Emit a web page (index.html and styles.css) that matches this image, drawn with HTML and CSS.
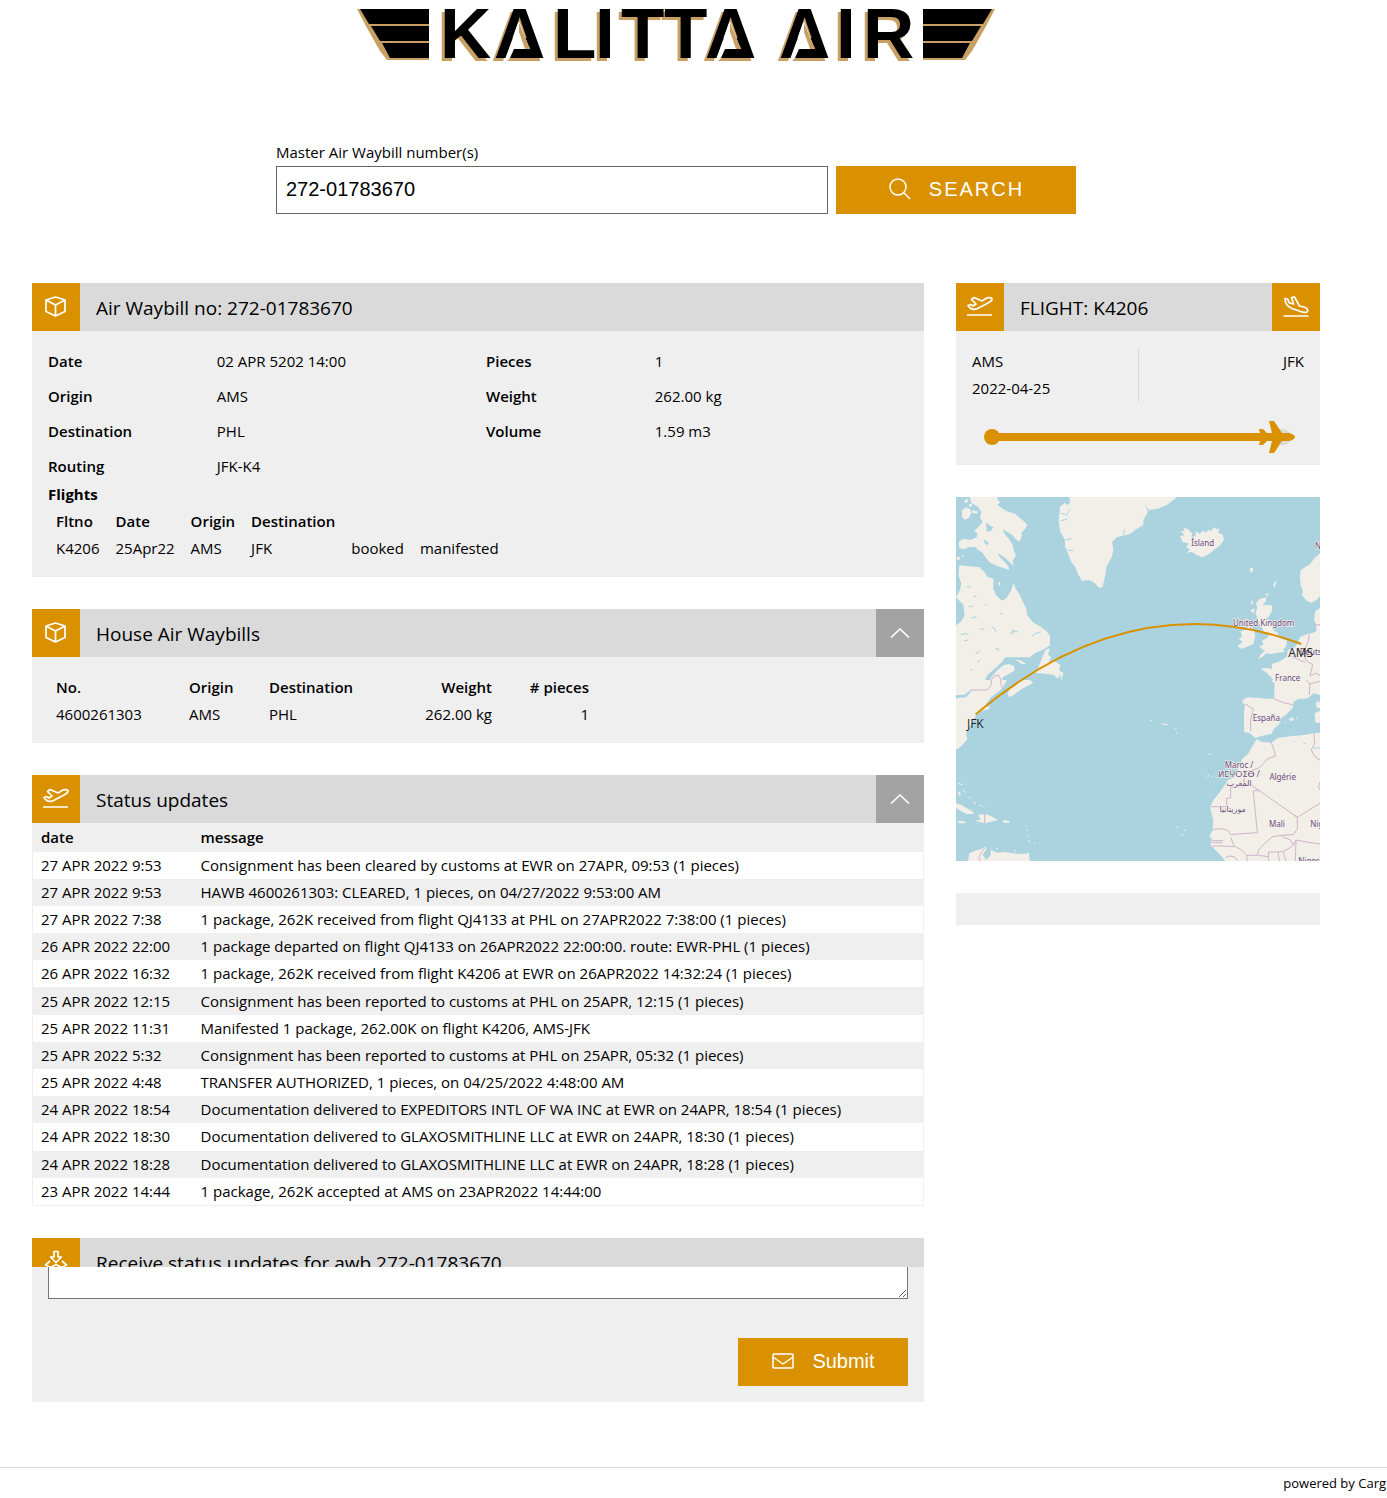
FILE: index.html
```html
<!DOCTYPE html>
<html lang="en">
<head>
    <meta charset="UTF-8">
    <meta name="viewport" content="width=device-width, initial-scale=1.0">
    <title>Kalitta Air - Track and Trace</title>
    <link rel="stylesheet" href="styles.css">
</head>
<body>
    <svg class="sprite" aria-hidden="true">
        <symbol id="icon-box" viewBox="0 0 24 24">
            <path d="M11.500 2 21 5V16.500L11.500 21 2 16.500V5ZM2 5 11.500 10 21 5M11.500 10V21"/>
        </symbol>
        <symbol id="icon-takeoff" viewBox="0 0 28 24">
            <path d="M2 10.500 4.500 9.500 7 11 10 9 5.500 4.500 8 2.500 16 6 20.500 3.300C23 2 26 2.500 26 4S24 7 22 8L11.500 13.500C8 15 4.500 14.500 2 10.500ZM1 20H26"/>
        </symbol>
        <symbol id="icon-landing" viewBox="0 0 28 24">
            <path d="M3 3.500 5.500 4 7.500 8 11.500 9 9.500 2.500 12.500 2 17.500 11 22 12C25.500 13 26 15 25.500 16.500S22 17.300 20 17L10 13.500C5 11.500 3 8 3 3.500ZM1.500 21H26.500"/>
        </symbol>
        <symbol id="icon-up" viewBox="0 0 24 24">
            <path d="M3 16.500 12 8 21 16.500"/>
        </symbol>
        <symbol id="icon-inbox" viewBox="0 0 24 24">
            <path d="M10 1.500H14V7H17.500L12 12.500 6.500 7H10ZM6 11 1.500 15 6.500 17.500 12 14.500 17.500 17.500 22.500 15 18 11M3.500 17V21L12 24 20.500 21V17"/>
        </symbol>
        <symbol id="icon-search" viewBox="0 0 24 24">
            <circle cx="10" cy="10" r="8"/>
            <path d="M15.800 15.800 22 22"/>
        </symbol>
        <symbol id="icon-mail" viewBox="0 0 24 24">
            <rect x="2" y="5" width="20" height="14" rx="1"/>
            <path d="M2 8 12 15 22 8"/>
        </symbol>
        <!-- open foot of the three A's in the logo -->
        <symbol id="logo-foot" viewBox="0 0 50 56" overflow="visible">
            <path fill="#fff" d="M24 14 35 43H20L15 55H9Z"/>
            <path fill="#c9a063" d="M24 16V25L30 42H35Z"/>
            <path fill="#000" d="M19 42H36L40 51H15Z"/>
            <path fill="#c9a063" d="M15 51H40V54H12Z"/>
        </symbol>
    </svg>

    <div class="page">
        <header class="logo">
            <svg viewBox="0 0 640 56" role="img" aria-label="Kalitta Air">
                <path class="wing-edge" d="M1 2H73V53H31L24 44 20 37 11 21Z"/>
                <path class="wing-edge" d="M639 2H567V53H609L616 44 620 37 629 21Z"/>
                <path d="M4 2H73V17H13ZM15 19H73V34H24ZM26 36H73V51H34Z"/>
                <path d="M636 2H567V17H627ZM625 19H567V34H616ZM614 36H567V51H606Z"/>
                <text class="logo-text" y="51" x="84 138 197 239 265 308 349 370 423 480 507">KALITTA AIR</text>
                <use href="#logo-foot" x="139" width="50" height="56"/>
                <use href="#logo-foot" x="350" width="50" height="56"/>
                <use href="#logo-foot" x="424" width="50" height="56"/>
            </svg>
        </header>

        <form class="search" onsubmit="return false">
            <label for="awb">Master Air Waybill number(s)</label>
            <div class="search-row">
                <input type="text" id="awb" value="272-01783670">
                <button type="submit" class="btn btn-search"><svg class="icon"><use href="#icon-search"/></svg>SEARCH</button>
            </div>
        </form>

        <div class="columns">
            <main class="stack">
                <section class="panel">
                    <div class="panel-head">
                        <span class="tile"><svg class="icon"><use href="#icon-box"/></svg></span>
                        <h2>Air Waybill no: 272-01783670</h2>
                    </div>
                    <div class="panel-body">
                        <div class="details">
                            <dl>
                                <dt>Date</dt><dd>02 APR 5202 14:00</dd>
                                <dt>Origin</dt><dd>AMS</dd>
                                <dt>Destination</dt><dd>PHL</dd>
                                <dt>Routing</dt><dd>JFK-K4</dd>
                            </dl>
                            <dl>
                                <dt>Pieces</dt><dd>1</dd>
                                <dt>Weight</dt><dd>262.00 kg</dd>
                                <dt>Volume</dt><dd>1.59 m3</dd>
                            </dl>
                        </div>
                        <h3>Flights</h3>
                        <table class="flights">
                            <thead>
                                <tr><th>Fltno</th><th>Date</th><th>Origin</th><th>Destination</th><th></th><th></th></tr>
                            </thead>
                            <tbody>
                                <tr><td>K4206</td><td>25Apr22</td><td>AMS</td><td>JFK</td><td>booked</td><td>manifested</td></tr>
                            </tbody>
                        </table>
                    </div>
                </section>

                <section class="panel">
                    <div class="panel-head">
                        <span class="tile"><svg class="icon"><use href="#icon-box"/></svg></span>
                        <h2>House Air Waybills</h2>
                        <button type="button" class="tile toggle" aria-label="Collapse"><svg class="icon"><use href="#icon-up"/></svg></button>
                    </div>
                    <div class="panel-body">
                        <table class="house">
                            <thead>
                                <tr><th>No.</th><th>Origin</th><th>Destination</th><th class="num">Weight</th><th class="num"># pieces</th></tr>
                            </thead>
                            <tbody>
                                <tr><td>4600261303</td><td>AMS</td><td>PHL</td><td class="num">262.00 kg</td><td class="num">1</td></tr>
                            </tbody>
                        </table>
                    </div>
                </section>

                <section class="panel">
                    <div class="panel-head">
                        <span class="tile"><svg class="icon icon-wide"><use href="#icon-takeoff"/></svg></span>
                        <h2>Status updates</h2>
                        <button type="button" class="tile toggle" aria-label="Collapse"><svg class="icon"><use href="#icon-up"/></svg></button>
                    </div>
                    <table class="status">
                        <thead>
                            <tr><th>date</th><th>message</th></tr>
                        </thead>
                        <tbody>
                            <tr><td>27 APR 2022 9:53</td><td>Consignment has been cleared by customs at EWR on 27APR, 09:53 (1 pieces)</td></tr>
                            <tr><td>27 APR 2022 9:53</td><td>HAWB 4600261303: CLEARED, 1 pieces, on 04/27/2022 9:53:00 AM</td></tr>
                            <tr><td>27 APR 2022 7:38</td><td>1 package, 262K received from flight QJ4133 at PHL on 27APR2022 7:38:00 (1 pieces)</td></tr>
                            <tr><td>26 APR 2022 22:00</td><td>1 package departed on flight QJ4133 on 26APR2022 22:00:00. route: EWR-PHL (1 pieces)</td></tr>
                            <tr><td>26 APR 2022 16:32</td><td>1 package, 262K received from flight K4206 at EWR on 26APR2022 14:32:24 (1 pieces)</td></tr>
                            <tr><td>25 APR 2022 12:15</td><td>Consignment has been reported to customs at PHL on 25APR, 12:15 (1 pieces)</td></tr>
                            <tr><td>25 APR 2022 11:31</td><td>Manifested 1 package, 262.00K on flight K4206, AMS-JFK</td></tr>
                            <tr><td>25 APR 2022 5:32</td><td>Consignment has been reported to customs at PHL on 25APR, 05:32 (1 pieces)</td></tr>
                            <tr><td>25 APR 2022 4:48</td><td>TRANSFER AUTHORIZED, 1 pieces, on 04/25/2022 4:48:00 AM</td></tr>
                            <tr><td>24 APR 2022 18:54</td><td>Documentation delivered to EXPEDITORS INTL OF WA INC at EWR on 24APR, 18:54 (1 pieces)</td></tr>
                            <tr><td>24 APR 2022 18:30</td><td>Documentation delivered to GLAXOSMITHLINE LLC at EWR on 24APR, 18:30 (1 pieces)</td></tr>
                            <tr><td>24 APR 2022 18:28</td><td>Documentation delivered to GLAXOSMITHLINE LLC at EWR on 24APR, 18:28 (1 pieces)</td></tr>
                            <tr><td>23 APR 2022 14:44</td><td>1 package, 262K accepted at AMS on 23APR2022 14:44:00</td></tr>
                        </tbody>
                    </table>
                </section>

                <section class="panel">
                    <div class="panel-head">
                        <span class="tile"><svg class="icon"><use href="#icon-inbox"/></svg></span>
                        <h2>Receive status updates for awb 272-01783670</h2>
                    </div>
                    <form class="subscribe" onsubmit="return false">
                        <textarea aria-label="E-mail addresses"></textarea>
                        <button type="submit" class="btn btn-submit"><svg class="icon"><use href="#icon-mail"/></svg>Submit</button>
                    </form>
                </section>
            </main>

            <aside class="stack">
                <section class="panel">
                    <div class="panel-head">
                        <span class="tile"><svg class="icon icon-wide"><use href="#icon-takeoff"/></svg></span>
                        <h2>FLIGHT: K4206</h2>
                        <span class="tile"><svg class="icon icon-wide"><use href="#icon-landing"/></svg></span>
                    </div>
                    <div class="panel-body">
                        <div class="legs">
                            <div>AMS<br>2022-04-25</div>
                            <div class="arrival">JFK</div>
                        </div>
                        <div class="progress">
                            <span class="dot"></span>
                            <span class="line"></span>
                            <svg class="plane" viewBox="0 0 37 32">
                                <circle class="end" cx="25" cy="16" r="8"/>
                                <path d="M1 8H5L9 12H14L11 0H16L24 12H31C34 12.500 37 14.500 37 16S34 19.500 31 20H24L16 32H11L14 20H9L5 24H1L3 16Z"/>
                            </svg>
                        </div>
                    </div>
                </section>

                <svg class="map" viewBox="0 0 1092 1092" role="img" aria-label="Route map">
                    <!-- North America and Greenland -->
                    <g transform="translate(-18 -21)">
                        <path class="land" d="M60 21H140L150 38 142 44 160 58 172 64 196 72 210 84 222 94 232 104 226 116 214 128 216 136 208 156 196 146 188 136 172 126 158 118 164 132 178 148 188 166 192 182 198 196 188 212 192 228 184 222 168 206 154 196 142 190 150 202 166 218 176 232 178 240 160 234 142 228 120 218 104 198 96 186 84 180 76 170 56 172 42 178 28 174 26 156 40 146 62 150 80 142 82 130 72 122 84 112 98 96 90 82 94 66 84 50 64 40ZM36 62 46 52 60 56 64 70 56 84 44 90 36 80ZM64 60 82 64 84 70 68 70ZM42 32 52 26 56 34 46 40ZM56 42 66 42 66 50 58 50ZM20 200 30 202 30 208 22 210ZM34 194 42 196 40 202Z"/>
                        <path class="water" d="M108 96 118 106 130 112 122 124 110 124ZM104 148 116 160 110 166 102 156Z"/>
                        <path class="land" d="M28 226 48 228 76 230 88 232 104 246 112 260 130 266 130 296 138 316 156 332 170 324 184 300 190 278 196 294 210 316 220 338 228 354 232 376 250 398 272 410 290 424 300 438 300 466 278 480 256 488 240 502 166 502 154 518 134 536 112 556 104 572 156 572 158 562 176 552 194 542 192 528 176 522 160 526 140 542 124 562 110 590 18 590V406L36 392 44 374 40 344 18 322 30 300 34 280 26 258ZM194 508 214 512 228 522 214 522ZM300 476 288 478 276 504 266 530 256 548 288 552 310 554 324 566 330 552 334 570 340 548 328 542 330 524 314 514 296 516 304 502 294 494Z"/>
                        <path class="land" d="M330 50 344 38 352 46 360 38 358 21H580V105L560 116 540 132 524 136 500 142 486 156 490 180 484 204 470 228 466 254 458 290 448 294 430 276 416 270 396 272 384 252 376 232 364 216 356 196 346 172 344 148 330 124 326 92Z"/>
                        <path class="lake" d="M50 292l12-2M70 320l10-2M56 350l12-2M64 384l16-4M32 434l16-4 8 6M76 492l12-8M92 416l10 2M124 412l10 4 4 10M136 478l8-4 2 10M180 430l10-8 14 4M246 438l16-10 10-2M84 518l4-8M60 538l8 2M150 370l8 2M104 344l6 2M42 452l12-2M334 70l20 6M332 92l20-4M346 150l18-4M350 180l20 2M352 70l10-12M520 136l4-18M190 434l-2-16"/>
                        <path class="land" d="M144 278l6 -2 2 8-6 2z"/>
                        <path class="border" d="M124 570 132 558 146 556 154 572"/>
                    </g>
                    <!-- US east coast, Caribbean, South America -->
                    <g transform="translate(-18 549)">
                        <path class="land" d="M18 0H215L196 18 180 26 172 42 178 52 192 44 214 28 240 14 250 8 240 0H170L160 20 152 30 124 50 104 78 120 80 116 88 96 92 80 102 68 126 56 144 48 160 52 178 42 190 28 204 18 208ZM18 370 34 374 52 386 68 394 72 402 50 402 34 394 18 384ZM22 422 44 424 46 430 28 430ZM72 422 92 420 84 404 104 402 124 408 144 420 130 424 106 430ZM160 420 178 422 178 428 160 428ZM54 543 58 520 76 512 94 508 104 500 110 506 98 524 108 540 122 526 122 510 142 518 164 516 190 520 216 522 236 520 240 543ZM26 332 32 342 30 350 24 340Z"/>
                        <path class="water" d="M18 46 44 44 62 30 64 34 48 52 18 54Z"/>
                        <path class="border" d="M62 30H112L124 14V0M152 0 154 18 162 30M104 402V430M104 504 92 520 86 534 92 543"/>
                        <path class="islands" d="M24 310l14 4M38 330l8 8M56 352l6 4M70 366l8 4M88 376l6 2M100 380l4 2M226 436l2 4M230 450l4 2M234 464l4 6M236 480l2 8M252 488l4 2M122 506l4-2M138 504l6 2M194 512l4 0M232 522l6-2"/>
                    </g>
                    <!-- Iceland, British Isles, Scandinavia -->
                    <g transform="translate(522 -21)">
                        <path class="land" d="M0 21H142L112 44 84 56 56 60 44 44 54 66 42 86 24 104 0 130ZM150 138 164 136 152 122 164 124 160 114 174 118 186 130 184 142 196 138 198 124 210 132 218 122 228 128 234 120 246 122 250 112 262 118 268 114 266 128 278 134 282 148 272 164 256 176 242 188 230 196 216 202 198 194 186 186 170 188 180 178 168 172 176 160 158 156ZM358 236 370 232 368 242 364 250ZM430 284 438 270 438 280 434 294ZM570 190 552 206 540 222 512 240 510 260 512 286 518 300 516 316 530 332 544 338 560 330 570 318ZM390 326 410 322 406 336 398 344 426 346 426 362 416 380 404 386 416 388 422 402 430 420 442 428 448 442 456 448 470 450 470 466 460 478 464 486 444 488 424 492 408 490 398 500 384 506 392 494 404 482 388 470 400 464 396 452 412 444 416 432 402 430 398 416 388 402 382 382 376 372 382 354 378 340ZM332 424 344 420 358 406 372 420 376 438 370 462 352 470 334 476 322 468 338 456 326 446 336 440ZM362 340 370 328 368 344ZM360 362 374 354 372 370ZM406 312 414 310 412 320ZM570 354 556 364 552 388 558 404 560 424 544 430 526 434 510 442 504 460 494 472 474 480 470 500 450 514 426 522 426 536 406 534 392 536 410 548 422 560 434 574 570 574Z"/>
                        <path class="border" d="M538 434 534 456 526 474 524 496 528 512 548 524 540 558 556 550 570 556M552 406 570 404M480 496 500 506 526 518M360 410 366 422"/>
                    </g>
                    <!-- Iberia, France, North and West Africa -->
                    <g transform="translate(522 549)">
                        <path class="land" d="M424 0 434 12 432 56 410 56 384 54 352 52 336 62 344 78 342 100 342 156 360 160 376 174 394 168 424 162 432 146 448 132 450 116 468 104 488 84 490 66 506 56 530 56 552 40 570 46V0ZM558 68 566 62 570 70V84H560ZM554 100 570 92V128H556ZM476 118 488 112 492 120 482 124ZM498 112 504 114 498 116ZM462 126 468 126 466 130ZM380 178 396 186 424 188 444 174 484 168 518 166 552 160 570 158V543H286L268 522 254 508 242 496 246 476 238 468 248 452 250 420 240 382 252 358 270 336 282 318 294 300 314 292 326 262 336 238 354 222 366 200Z"/>
                        <path class="border" d="M340 76 352 74 356 80 370 86 362 120 362 154M432 56 460 68 488 74M530 0 540 12 538 44M538 12 570 4M424 188 432 210 436 228 410 238 404 248 386 264 362 272 344 274 342 314 362 314 488 402 502 412 570 370M342 320 302 322V354H290V380H242M342 300V322M370 332H388M370 334 382 458 324 462 302 464 294 452 276 446 250 448M488 402 502 412V446L490 464 456 466 428 470 404 490 386 510 382 526 350 526 332 508 312 498 302 472M246 482H280M246 488H276M246 498H280L312 500M286 532 302 528 316 532 322 543M350 526 352 543M386 526 414 530M416 543V516H444L460 514 482 502 490 496 482 480 456 470M444 516 448 543M460 516 468 543M490 496 498 480 540 488 570 492M498 480 496 543M552 160 554 190 544 210 556 232 570 240M570 306 566 320 570 330"/>
                        <path class="islands" d="M62 120l4 2M94 132l20 2M134 146l6 2M138 158l4 0M236 222l8 2M226 294l4-4M234 284l2 6M246 290l4-2M256 292l4 2M138 440l4 2M148 464l4-2M162 450l6 2M156 466l8-2"/>
                        <path class="lake" d="M552 204h18M490 186h4M520 190h8"/>
                    </g>
                    <g class="country">
                        <text x="740" y="147">Ísland</text>
                        <text x="923" y="386">United Kingdom</text>
                        <text x="1064" y="473">Deuts</text>
                        <text x="995" y="552">France</text>
                        <text x="931" y="672">España</text>
                        <text x="849" y="814">Maroc /</text>
                        <text x="849" y="840">ⵍⵎⵖⵔⵉⴱ /</text>
                        <text x="849" y="866">المغرب</text>
                        <text x="830" y="946">موريتانيا</text>
                        <text x="980" y="848">Algérie</text>
                        <text x="963" y="990">Mali</text>
                        <text x="1094" y="990">Niger</text>
                        <text x="1068" y="1100">Nigeria</text>
                        <text x="1112" y="156">Norge</text>
                    </g>
                    <path class="route" d="M59 652Q530 254 1036 441"/>
                    <g class="airport">
                        <text x="58" y="692">JFK</text>
                        <text x="1034" y="480">AMS</text>
                    </g>
                </svg>

                <div class="panel empty"></div>
            </aside>
        </div>
    </div>

    <footer>powered by Carg</footer>
</body>
</html>
```

FILE: styles.css
```css
* {
    box-sizing: border-box;
}
body {
    margin: 0;
    font-family: "Segoe UI", "Open Sans", "Noto Sans", sans-serif;
    font-size: 15px;
    line-height: 27px;
    color: #000;
    background-color: #fff;
}
h2, h3, dl, dd {
    margin: 0;
}
.sprite {
    position: absolute;
    width: 0;
    height: 0;
}
.page {
    margin-right: 35px;
    padding: 0 32px;
}
.icon {
    width: 24px;
    height: 24px;
    fill: none;
    stroke: #fff;
    stroke-width: 1.7;
    stroke-linejoin: round;
}
.icon-wide {
    width: 28px;
}

/* logo */
.logo {
    display: flex;
    justify-content: center;
    padding-top: 7px;
}
.logo svg {
    width: 640px;
    max-width: 100%;
    overflow: visible;
}
.logo-text {
    font-family: "Liberation Sans", Arial, sans-serif;
    font-weight: bold;
    font-size: 71px;
    filter: drop-shadow(-3px 3px 0 #c9a063);
}
.wing-edge {
    fill: #c9a063;
}

/* search */
.search {
    max-width: 800px;
    margin: 76px auto 69px;
}
.search label {
    display: block;
}
.search-row {
    display: flex;
    gap: 8px;
}
.search input {
    flex: 1;
    min-width: 0;
    height: 48px;
    padding: 0 9px 2px;
    border: 1px solid #666;
    font-family: "Liberation Sans", Arial, sans-serif;
    font-size: 20px;
}
.btn {
    display: flex;
    align-items: center;
    justify-content: center;
    gap: 17px;
    height: 48px;
    padding: 0 0 2px;
    border: none;
    background-color: #da9100;
    color: #fff;
    font-family: "Liberation Sans", Arial, sans-serif;
    font-size: 20px;
    cursor: pointer;
}
.btn .icon {
    stroke-width: 1.5;
}
.btn-search {
    width: 240px;
    letter-spacing: 2px;
}
.btn-submit {
    width: 170px;
}

/* panels */
.columns {
    display: grid;
    grid-template-columns: minmax(0, 1fr) 364px;
    align-items: start;
    gap: 32px;
}
.stack {
    display: flex;
    flex-direction: column;
    gap: 32px;
}
.panel {
    background-color: #efefef;
}
.panel-head {
    display: flex;
    height: 48px;
    background-color: #dadada;
}
.panel-head h2 {
    flex: 1;
    padding-left: 16px;
    font-size: 19px;
    font-weight: normal;
    line-height: 50px;
}
.tile {
    display: flex;
    align-items: center;
    justify-content: center;
    width: 48px;
    height: 48px;
    padding: 0;
    border: none;
    background-color: #da9100;
}
.toggle {
    background-color: #a3a3a3;
    cursor: pointer;
}
.panel-body {
    padding: 17px 16px 15px;
}
.empty {
    height: 32px;
}

/* waybill */
.details {
    display: grid;
    grid-template-columns: 1fr 1fr;
    align-items: start;
    gap: 16px;
}
.details dl {
    display: grid;
    grid-template-columns: 2fr 3fr;
    row-gap: 8px;
}
dt, th {
    font-weight: 600;
}
h3 {
    margin-top: 1px;
    font-size: 15px;
    font-weight: bold;
}
table {
    border-collapse: collapse;
}
th, td {
    padding: 0 8px;
    text-align: left;
    white-space: nowrap;
}
.num {
    text-align: right;
}
.house th:nth-child(1) {
    width: 133px;
}
.house th:nth-child(2) {
    width: 80px;
}
.house th:nth-child(3) {
    width: 140px;
}
.house th:nth-child(4) {
    width: 99px;
}
.house th:nth-child(5) {
    width: 97px;
}

/* status */
.status {
    width: 100%;
    height: 383px;
    border: 1px solid #efefef;
}
.status th {
    height: 28px;
}
.status th:first-child {
    width: 160px;
}
.status tbody tr:nth-child(odd) {
    background-color: #fff;
}

/* the form slides over its panel head */
.subscribe {
    position: relative;
    display: flex;
    flex-direction: column;
    align-items: flex-end;
    gap: 39px;
    margin-top: -19px;
    padding: 0 16px 16px;
    background-color: #efefef;
}
.subscribe textarea {
    width: 100%;
    height: 32px;
    border: 1px solid #767676;
    border-top: none;
}

/* flight */
.legs {
    display: grid;
    grid-template-columns: 1fr 1fr;
}
.arrival {
    border-left: 1px solid #dadada;
    text-align: right;
}
.progress {
    display: flex;
    align-items: center;
    height: 32px;
    margin: 19px 9px -3px 12px;
}
.dot {
    width: 16px;
    height: 16px;
    border-radius: 50%;
    background-color: #da9100;
}
.line {
    flex: 1;
    height: 8px;
    margin: 0 -6px 0 -2px;
    background-color: #da9100;
}
.plane {
    width: 37px;
    height: 32px;
    fill: #da9100;
}
.plane .end {
    fill: #dadada;
}

/* map */
.map {
    display: block;
    width: 100%;
    aspect-ratio: 1;
    background-color: #aad3df;
}
.land {
    fill: #f2efe9;
}
.water {
    fill: #aad3df;
}
.lake, .border, .islands, .route {
    fill: none;
    stroke-width: 3;
}
.lake {
    stroke: #aad3df;
}
.border {
    stroke: #cdb5c9;
}
.islands {
    stroke: #f2efe9;
}
.route {
    stroke: #da9100;
    stroke-width: 6;
}
.country text {
    font-family: "Noto Sans", "DejaVu Sans", sans-serif;
    font-size: 24px;
    text-anchor: middle;
    fill: #6d4c7d;
    stroke: #f2efe9;
    stroke-width: 4;
    paint-order: stroke;
}
.airport text {
    font-size: 36px;
    text-anchor: middle;
    fill: #222;
}

footer {
    margin-top: 65px;
    padding: 2px 1px 0 0;
    border-top: 1px solid #dadada;
    font-size: 13px;
    text-align: right;
}
```
